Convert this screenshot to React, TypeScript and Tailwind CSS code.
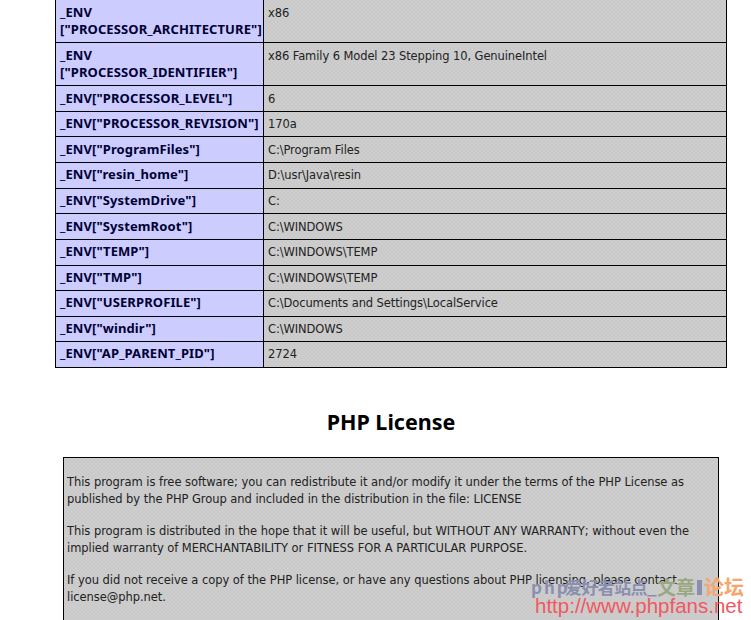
const rows: { name: string; value: string; height: string; top: string }[] = [
  { name: '_ENV["PROCESSOR_LEVEL"]', value: '6', height: 'h-[26px]', top: 'pt-[4px]' },
  { name: '_ENV["PROCESSOR_REVISION"]', value: '170a', height: 'h-[25px]', top: 'pt-[3px]' },
  { name: '_ENV["ProgramFiles"]', value: 'C:\\Program Files', height: 'h-[26px]', top: 'pt-[4px]' },
  { name: '_ENV["resin_home"]', value: 'D:\\usr\\Java\\resin', height: 'h-[26px]', top: 'pt-[3px]' },
  { name: '_ENV["SystemDrive"]', value: 'C:', height: 'h-[25px]', top: 'pt-[3px]' },
  { name: '_ENV["SystemRoot"]', value: 'C:\\WINDOWS', height: 'h-[26px]', top: 'pt-[4px]' },
  { name: '_ENV["TEMP"]', value: 'C:\\WINDOWS\\TEMP', height: 'h-[26px]', top: 'pt-[3px]' },
  { name: '_ENV["TMP"]', value: 'C:\\WINDOWS\\TEMP', height: 'h-[25px]', top: 'pt-[3px]' },
  { name: '_ENV["USERPROFILE"]', value: 'C:\\Documents and Settings\\LocalService', height: 'h-[26px]', top: 'pt-[3px]' },
  { name: '_ENV["windir"]', value: 'C:\\WINDOWS', height: 'h-[25px]', top: 'pt-[3px]' },
  { name: '_ENV["AP_PARENT_PID"]', value: '2724', height: 'h-[26px]', top: 'pt-[3px]' },
];

const grey =
  'bg-[#cecece] bg-[radial-gradient(#c8c8c8_0.7px,transparent_0.8px),radial-gradient(#c8c8c8_0.7px,transparent_0.8px)] bg-[length:4px_4px] bg-[position:0_0,2px_2px]';

function Row({ name, value, height, top }: { name: string; value: string; height: string; top: string }) {
  return (
    <div className={`flex border-b border-black ${height}`}>
      <div className={`w-[208px] shrink-0 border-r border-black bg-[#ccccff] pl-[4px] font-['Noto_Sans',sans-serif] text-[13px] leading-[17px] font-bold tracking-[0.1px] whitespace-pre-line text-[#000033] ${top}`}>
        {name}
      </div>
      <div className={`flex-1 pl-[4px] leading-[17px] text-[#222222] ${top} ${grey}`}>
        <div className="pt-[1px]">{value}</div>
      </div>
    </div>
  );
}

export default function App() {
  return (
    <div className="relative h-[620px] w-[751px] overflow-hidden bg-white font-['DejaVu_Sans',sans-serif] text-[11.5px] tracking-[-0.1px]">
      <div className="ml-[55px] w-[672px] border-x border-black">
        <Row name={'_ENV\n["PROCESSOR_ARCHITECTURE"]'} value="x86" height="h-[43px]" top="pt-[4px]" />
        <Row name={'_ENV\n["PROCESSOR_IDENTIFIER"]'} value="x86 Family 6 Model 23 Stepping 10, GenuineIntel" height="h-[43px]" top="pt-[4px]" />
        {rows.map((r) => (
          <Row key={r.name} {...r} />
        ))}
      </div>
      <h2 className="mt-[40px] ml-[31px] text-center font-['Noto_Sans',sans-serif] text-[21.5px] leading-[28px] font-bold tracking-normal text-black">
        PHP License
      </h2>
      <div className={`mt-[21px] ml-[63px] h-[300px] w-[656px] border border-black pt-[16px] pr-[4px] pl-[3px] leading-[17px] tracking-[-0.05px] text-[#222222] ${grey}`}>
        <p>
          This program is free software; you can redistribute it and/or modify it under the terms of the PHP License as
          <br />
          published by the PHP Group and included in the distribution in the file: LICENSE
        </p>
        <p className="mt-[15px]">
          This program is distributed in the hope that it will be useful, but WITHOUT ANY WARRANTY; without even the
          <br />
          implied warranty of MERCHANTABILITY or FITNESS FOR A PARTICULAR PURPOSE.
        </p>
        <p className="mt-[15px]">
          If you did not receive a copy of the PHP license, or have any questions about PHP licensing, please contact
          <br />
          license@php.net.
        </p>
      </div>
      {/* forum watermark */}
      <div className="absolute top-[577px] left-[531px] flex items-center font-['Noto_Sans_CJK_SC',sans-serif] text-[17px] leading-[20px] font-bold tracking-normal whitespace-nowrap text-[#8a8fb0]">
        <span className="w-[34px] tracking-[2px]">php</span>
        <span className="tracking-[-0.6px]">爱好者站点</span>
        <span className="w-[10px]">_</span>
        <span className="text-[19px] text-[#9aa87f]">文章</span>
        <span className="mx-[2px] h-[15px] w-[5px] bg-[#8a8fb0]" />
        <span className="text-[20px] text-[#f4a76f]">论坛</span>
      </div>
      <div className="absolute top-[596px] left-[535px] font-['Liberation_Sans',sans-serif] text-[20.5px] leading-[20px] tracking-normal whitespace-nowrap text-[#f1585f]">
        http://www.phpfans.net
      </div>
    </div>
  );
}
